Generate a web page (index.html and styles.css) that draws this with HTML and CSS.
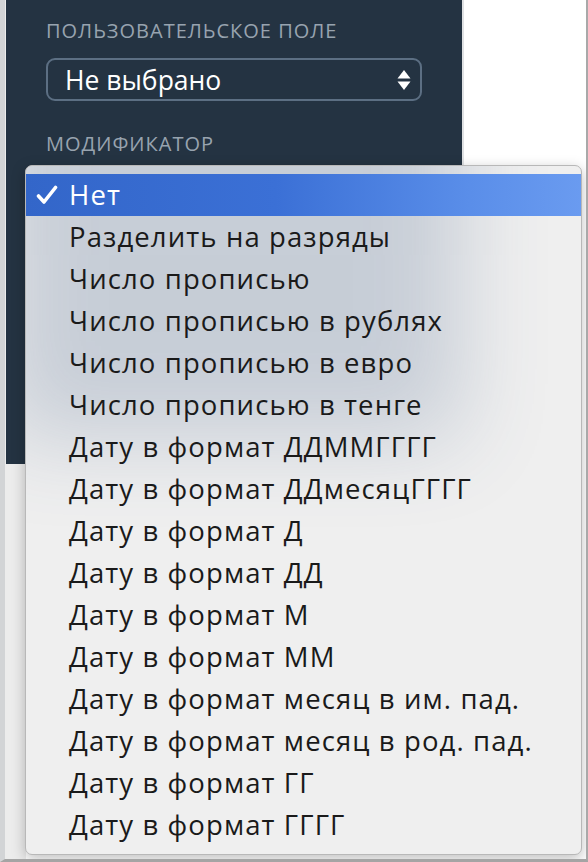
FILE: index.html
```html
<!DOCTYPE html>
<html lang="ru">
<head>
    <meta charset="UTF-8">
    <meta name="viewport" content="width=device-width, initial-scale=1.0">
    <title>Модификатор</title>
    <link rel="stylesheet" href="styles.css">
</head>
<body>

    <div class="window">
        <div class="sidebar">
            <p class="label">Пользовательское поле</p>
            <div class="select">
                <span>Не выбрано</span>
                <svg class="arrows" width="14" height="22" viewBox="0 0 14 22">
                    <path d="M7 1 L13.5 9.5 L0.5 9.5 Z" fill="#fff"/>
                    <path d="M7 21 L13.5 12.5 L0.5 12.5 Z" fill="#fff"/>
                </svg>
            </div>
            <p class="label">Модификатор</p>
        </div>

        <!-- выпадающий список (открыт) -->
        <ul class="menu">
            <li class="selected">
                <svg class="check" width="22" height="20" viewBox="0 0 22 20">
                    <path d="M2.5 11 L8 17 L19.5 2.5" fill="none" stroke="#fff" stroke-width="3.6" stroke-linecap="round" stroke-linejoin="round"/>
                </svg>
                Нет
            </li>
            <li>Разделить на разряды</li>
            <li>Число прописью</li>
            <li>Число прописью в рублях</li>
            <li>Число прописью в евро</li>
            <li>Число прописью в тенге</li>
            <li>Дату в формат ДДММГГГГ</li>
            <li>Дату в формат ДДмесяцГГГГ</li>
            <li>Дату в формат Д</li>
            <li>Дату в формат ДД</li>
            <li>Дату в формат М</li>
            <li>Дату в формат ММ</li>
            <li>Дату в формат месяц в им. пад.</li>
            <li>Дату в формат месяц в род. пад.</li>
            <li>Дату в формат ГГ</li>
            <li>Дату в формат ГГГГ</li>
        </ul>
    </div>

</body>
</html>
```

FILE: styles.css
```css
body {
    margin: 0;
    background: #fff;
    font-family: 'Open Sans', sans-serif;
}

.window {
    position: relative;
    height: 862px;
    box-sizing: border-box;
    border-left: 5px solid #d2d4d6;
    border-right: 2px solid #a9a9a9;
    border-bottom: 3px solid #a4a4a4;
    background: linear-gradient(90deg, #ececec 21px, #fff 21px);
    overflow: hidden;
}

.sidebar {
    width: 458px;
    height: 464px;
    box-sizing: border-box;
    margin-left: 1px;
    padding: 19px 0 0 40px;
    background: #243342;
    border-right: 2px solid #dfe1e3;
}

.label {
    margin: 0;
    color: #98a3af;
    font-size: 20px;
    line-height: 24px;
    text-transform: uppercase;
    letter-spacing: 1px;
}

.select {
    display: flex;
    align-items: center;
    justify-content: space-between;
    width: 376px;
    height: 43px;
    box-sizing: border-box;
    margin: 15px 0 31px;
    padding: 0 9px 0 17px;
    border: 2px solid #5c6f83;
    border-radius: 9px;
    color: #fff;
    font-size: 26.5px;
}

/* меню поверх страницы */
.menu {
    position: absolute;
    left: 20px;
    top: 165px;
    width: 557px;
    height: 690px;
    box-sizing: border-box;
    margin: 0;
    padding: 8px 0 0;
    list-style: none;
    background: #efefef;
    border: 1px solid #b8b8b8;
    border-radius: 7px;
    box-shadow: 0 4px 14px rgba(0, 0, 0, 0.25);
    overflow: hidden;
}

.menu::before {
    content: "";
    position: absolute;
    left: -25px;
    top: -176px;
    width: 460px;
    height: 450px;
    background: #2a4a78;
    opacity: 0.2;
    filter: blur(45px);
}

.menu li {
    position: relative;
    height: 42px;
    line-height: 41px;
    padding-left: 43px;
    color: #1a1a1a;
    font-size: 27.5px;
    letter-spacing: 1.1px;
}

.menu li.selected {
    color: #fff;
    background: linear-gradient(90deg, #3366c9 0%, #3b70d6 45%, #5a8ee9 80%, #6a9bf0 100%);
}

.check {
    position: absolute;
    left: 10px;
    top: 11px;
}
```
